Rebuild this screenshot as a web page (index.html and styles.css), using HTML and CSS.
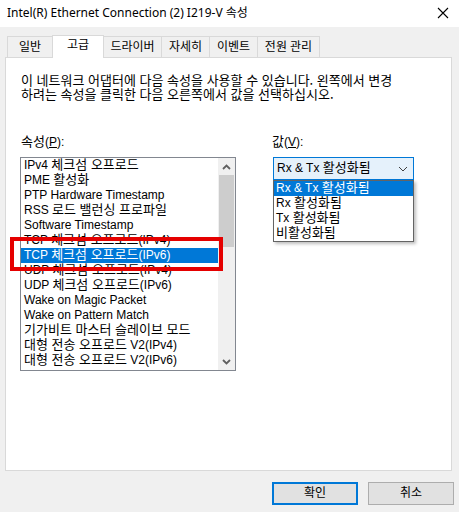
FILE: index.html
```html
<!DOCTYPE html>
<html lang="ko">
<head>
<meta charset="utf-8">
<link rel="stylesheet" href="styles.css">
</head>
<body>
<div class="window">
  <div class="titlebar">
    <span class="title">Intel(R) Ethernet Connection (2) I219-V 속성</span>
    <svg class="close" width="12" height="12" viewBox="0 0 12 12"><path d="M1 1L11 11M11 1L1 11" stroke="#000" stroke-width="1.1" fill="none"/></svg>
  </div>
  <div class="body">
    <div class="tabs">
      <div class="tab t1">일반</div>
      <div class="tab active t2">고급</div>
      <div class="tab t3">드라이버</div>
      <div class="tab t4">자세히</div>
      <div class="tab t5">이벤트</div>
      <div class="tab t6">전원 관리</div>
    </div>
    <div class="panel">
      <p class="desc">이 네트워크 어댑터에 다음 속성을 사용할 수 있습니다. 왼쪽에서 변경<br>하려는 속성을 클릭한 다음 오른쪽에서 값을 선택하십시오.</p>
      <div class="cols">
        <div class="left">
          <div class="label"><span class="k">속성</span>(<u>P</u>):</div>
          <div class="listbox">
            <div class="items">
              <div class="item">IPv4 <span class="k">체크섬 오프로드</span></div>
              <div class="item">PME <span class="k">활성화</span></div>
              <div class="item">PTP Hardware Timestamp</div>
              <div class="item">RSS <span class="k">로드 밸런싱 프로파일</span></div>
              <div class="item">Software Timestamp</div>
              <div class="item">TCP <span class="k">체크섬 오프로드</span>(IPv4)</div>
              <div class="item sel">TCP <span class="k">체크섬 오프로드</span>(IPv6)</div>
              <div class="item">UDP <span class="k">체크섬 오프로드</span>(IPv4)</div>
              <div class="item">UDP <span class="k">체크섬 오프로드</span>(IPv6)</div>
              <div class="item">Wake on Magic Packet</div>
              <div class="item">Wake on Pattern Match</div>
              <div class="item"><span class="k">기가비트 마스터 슬레이브 모드</span></div>
              <div class="item"><span class="k">대형 전송 오프로드</span> V2(IPv4)</div>
              <div class="item"><span class="k">대형 전송 오프로드</span> V2(IPv6)</div>
            </div>
            <div class="scrollbar">
              <div class="arrow"><svg width="9" height="6" viewBox="0 0 9 6"><path d="M1 5L4.5 1.5L8 5" stroke="#606060" stroke-width="1.8" fill="none"/></svg></div>
              <div class="track"><div class="thumb"></div></div>
              <div class="arrow"><svg width="9" height="6" viewBox="0 0 9 6"><path d="M1 1L4.5 4.5L8 1" stroke="#606060" stroke-width="1.8" fill="none"/></svg></div>
            </div>
            <div class="redbox"></div>
          </div>
        </div>
        <div class="right">
          <div class="label"><span class="k">값</span>(<u>V</u>):</div>
          <div class="combo">
            <span class="ctext">Rx &amp; Tx <span class="k">활성화됨</span></span>
            <svg width="10" height="6" viewBox="0 0 10 6"><path d="M1 1L5 5L9 1" stroke="#404040" stroke-width="1" fill="none"/></svg>
            <div class="dropdown">
              <div class="opt sel">Rx &amp; Tx <span class="k">활성화됨</span></div>
              <div class="opt">Rx <span class="k">활성화됨</span></div>
              <div class="opt">Tx <span class="k">활성화됨</span></div>
              <div class="opt"><span class="k">비활성화됨</span></div>
            </div>
          </div>
        </div>
      </div>
    </div>
    <div class="buttons">
      <div class="btn default">확인</div>
      <div class="btn">취소</div>
    </div>
  </div>
</div>
</body>
</html>
```

FILE: styles.css
```css
* { box-sizing: border-box; }
html, body { margin: 0; padding: 0; }
body {
  width: 459px;
  height: 512px;
  overflow: hidden;
  background: #f0f0f0;
  font-family: "Segoe UI", "Noto Sans", "Noto Sans CJK KR", sans-serif;
  font-size: 12px;
  color: #000;
}
.window { width: 459px; height: 512px; display: flex; flex-direction: column; }
.titlebar {
  height: 27px;
  background: #fff;
  display: flex;
  align-items: center;
  justify-content: space-between;
  padding: 0 10px 1px 7px;
  font-size: 12px;
  line-height: 16px;
}
.body { flex: 1; display: flex; flex-direction: column; padding: 8px 7px 0 5px; }
.tabs { display: flex; height: 22px; padding-left: 2px; align-items: flex-end; position: relative; z-index: 1; }
.tab {
  height: 21px;
  border: 1px solid #d9d9d9;
  border-bottom: none;
  border-left: none;
  background: #f0f0f0;
  text-align: center;
  line-height: 19px;
  font-size: 12px;
}
.t1 { width: 46px; border-left: 1px solid #d9d9d9; }
.t3 { width: 58px; }
.t4 { width: 48px; }
.t5 { width: 48px; }
.t6 { width: 62px; }
.tab.active {
  height: 23px;
  background: #fff;
  border: 1px solid #d9d9d9;
  border-bottom: none;
  margin-bottom: -1px;
  margin-left: -1px;
  width: 52px;
  line-height: 18px;
  padding-bottom: 2px;
}
.panel {
  height: 414px;
  background: #fff;
  border: 1px solid #d9d9d9;
  padding: 15px 0 0 15px;
  font-family: "Liberation Sans", "Noto Sans CJK KR", sans-serif;
  font-size: 12px;
}
.k { font-family: "Noto Sans CJK KR", sans-serif; font-size: 13px; line-height: 0; }
.desc { margin: 0; line-height: 14px; font-family: "Noto Sans CJK KR", sans-serif; font-size: 13px; }
.cols { display: flex; margin-top: 34px; }
.left { width: 251px; }
.label { line-height: 14px; height: 14px; }
.label u { text-decoration-thickness: 1px; text-underline-offset: 1px; }
.listbox {
  margin-top: 8px;
  margin-left: -1px;
  width: 216px;
  height: 214px;
  border: 1px solid #828790;
  display: flex;
  position: relative;
}
.items { flex: 1; overflow: hidden; }
.item { height: 15px; line-height: 15px; padding-left: 3px; white-space: nowrap; }
.item.sel { background: #0078d7; color: #fff; }
.scrollbar { width: 17px; background: #f0f0f0; display: flex; flex-direction: column; }
.arrow { height: 17px; display: flex; align-items: center; justify-content: center; }
.track { flex: 1; }
.thumb { margin: 0 1px; height: 72px; background: #cdcdcd; }
.redbox {
  position: absolute;
  left: -11px;
  top: 79px;
  width: 213px;
  height: 34px;
  border: 4px solid #e50000;
}
.right { flex: 1; }
.combo {
  position: relative;
  margin-top: 8px;
  margin-left: 1px;
  width: 141px;
  height: 23px;
  border: 1px solid #0078d7;
  background: #e5f1fb;
  display: flex;
  align-items: center;
  justify-content: space-between;
  padding: 0 5px 0 3px;
}
.ctext { line-height: 15px; }
.dropdown {
  position: absolute;
  left: -1px;
  top: 22px;
  width: 141px;
  border: 1px solid #646464;
  background: #fff;
  box-shadow: 2px 2px 3px rgba(0,0,0,0.25);
}
.opt { height: 15px; line-height: 15px; padding-left: 2px; white-space: nowrap; }
.opt.sel { background: #0078d7; color: #fff; }
.buttons { display: flex; justify-content: flex-end; gap: 10px; margin-top: 11px; margin-right: -2px; }
.btn {
  width: 86px;
  height: 23px;
  border: 1px solid #adadad;
  background: #e1e1e1;
  text-align: center;
  line-height: 20px;
}
.btn.default { border: 2px solid #0078d7; line-height: 18px; }
```
